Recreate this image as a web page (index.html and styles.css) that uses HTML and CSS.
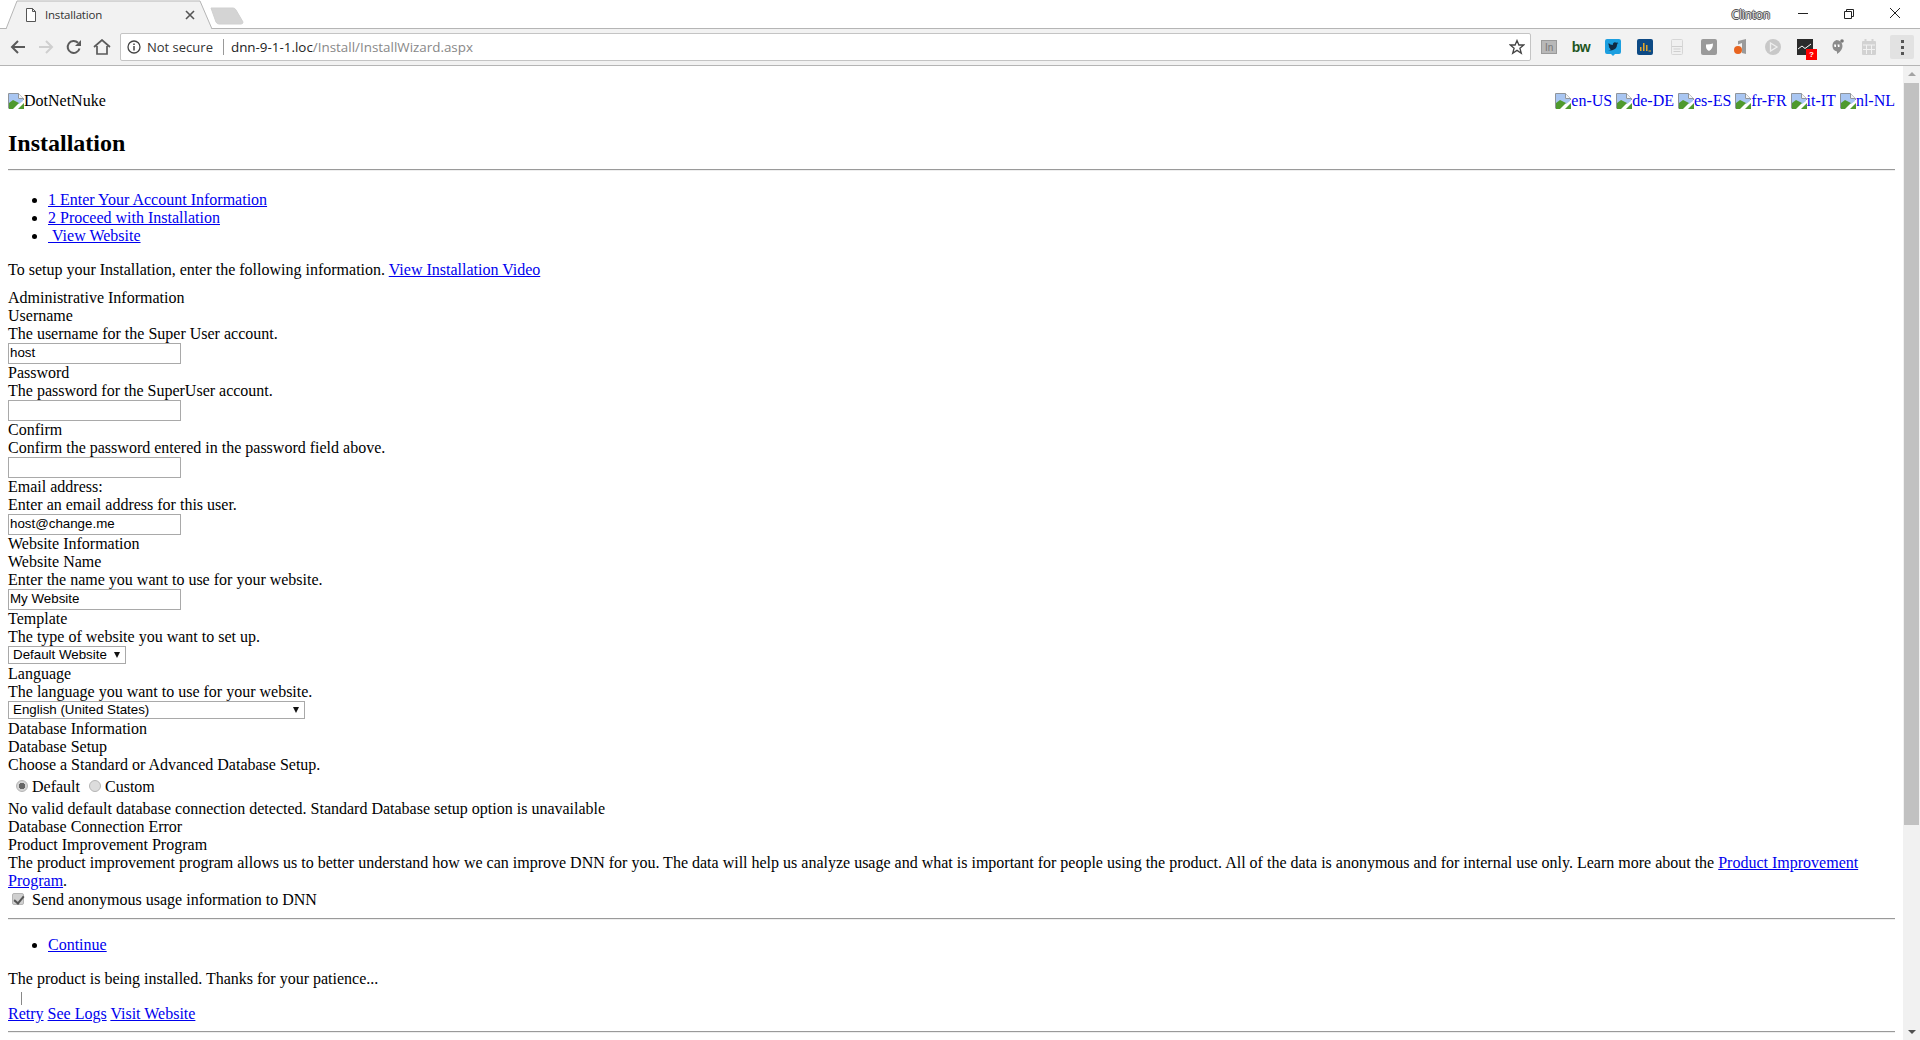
FILE: index.html
```html
<!DOCTYPE html>
<html lang="en">
<head>
<meta charset="utf-8">
<title>Installation</title>
<link rel="stylesheet" href="styles.css">
</head>
<body>
<svg class="defs" width="0" height="0" aria-hidden="true">
  <symbol id="broken" viewBox="0 0 16 16">
    <path d="M0 0H10.500L16 5.500V16H0Z" fill="#fff"/>
    <path d="M0.500 15.500V0.500H10.500L15.500 5.500V7" fill="none" stroke="#8f959c"/>
    <path d="M1 1H10V6H15V8L11 11L7 9L1 11Z" fill="#a9c6f2"/>
    <path d="M1 16V10L5 7L11 10L5 16Z" fill="#4f9a2e"/>
    <path d="M10 16L16 10V16Z" fill="#4f9a2e"/>
    <path d="M10.500 0.500V5.500H15.500" fill="#f4f4f4" stroke="#8f959c"/>
  </symbol>
</svg>

<header class="browser">
  <div class="tabstrip">
    <div class="tab">
      <svg class="tab-shape" width="212" height="29" viewBox="0 0 212 29"><path d="M0 29H5L16 1H199L211 29H212" fill="#f2f2f2" stroke="#b5b5b5"/></svg>
      <svg class="tab-icon" width="12" height="14" viewBox="0 0 12 14"><path d="M1.500 .5H7.500L10.500 3.500V13.500H1.500Z M7.500 .5V3.500H10.500" fill="#fff" stroke="#555"/></svg>
      <span class="tab-title">Installation</span>
      <svg class="tab-close" width="10" height="10" viewBox="0 0 10 10"><path d="M1 1L9 9M9 1L1 9" stroke="#555" stroke-width="1.600"/></svg>
    </div>
    <svg class="newtab" width="34" height="18" viewBox="0 0 34 18"><path d="M1 1H23Q25 1 26 3L33 15Q33 17 31 17H9Q7 17 6 15Z" fill="#d4d4d4" stroke="#d0d0d0"/></svg>
    <span class="profile">Clinton</span>
    <div class="winctl">
      <svg width="46" height="28" viewBox="0 0 46 28"><path d="M18 13.500H28" stroke="#222"/></svg>
      <svg width="46" height="28" viewBox="0 0 46 28"><path d="M18.500 11.500H25.500V18.500H18.500Z M20.500 11V9.500H27.500V16.500H26" fill="none" stroke="#222"/></svg>
      <svg width="46" height="28" viewBox="0 0 46 28"><path d="M18 8L28 18M28 8L18 18" stroke="#222"/></svg>
    </div>
  </div>
  <div class="toolbar">
    <span class="navbtn"><svg width="16" height="16" viewBox="0 0 16 16"><path d="M15 8H2M8 2L2 8L8 14" fill="none" stroke="#5a5a5a" stroke-width="2"/></svg></span>
    <span class="navbtn"><svg width="16" height="16" viewBox="0 0 16 16"><path d="M1 8H14M8 2L14 8L8 14" fill="none" stroke="#cfcfcf" stroke-width="2"/></svg></span>
    <span class="navbtn"><svg width="16" height="16" viewBox="0 0 16 16"><path d="M13.500 9.500A6 6 0 1 1 12 3.800" fill="none" stroke="#5a5a5a" stroke-width="2"/><path d="M15 1V7H9Z" fill="#5a5a5a"/></svg></span>
    <span class="navbtn"><svg width="18" height="16" viewBox="0 0 18 16"><path d="M1 8L9 1L17 8M4 7V15H14V7" fill="none" stroke="#5a5a5a" stroke-width="1.700"/></svg></span>
    <div class="omnibox">
      <svg class="info" width="14" height="14" viewBox="0 0 14 14"><circle cx="7" cy="7" r="6" fill="none" stroke="#444" stroke-width="1.300"/><path d="M7 6V10.500M7 3.500V5" stroke="#444" stroke-width="1.500"/></svg>
      <span class="secure">Not secure</span>
      <span class="sep"></span>
      <span class="url">dnn-9-1-1.loc<span class="path">/Install/InstallWizard.aspx</span></span>
      <svg class="star" width="16" height="16" viewBox="0 0 16 16"><path d="M8 1.500L9.900 6H14.800L10.900 9.200L12.300 14.200L8 11.400L3.700 14.200L5.100 9.200L1.200 6H6.100Z" fill="none" stroke="#444" stroke-width="1.300"/></svg>
    </div>
    <div class="extensions">
      <span class="ext"><svg width="16" height="14" viewBox="0 0 16 14"><rect x=".5" y=".5" width="15" height="13" fill="#b8b8b8" stroke="#9a9a9a"/><text x="4" y="11" class="ext-in">In</text></svg></span>
      <span class="ext"><span class="bw">bw</span></span>
      <span class="ext"><svg width="16" height="17" viewBox="0 0 16 17"><path d="M2 0H14Q16 0 16 2V13Q16 15 14 15H10L8 17L6 15H2Q0 15 0 13V2Q0 0 2 0Z" fill="#1c9fe0"/><path d="M3 11Q6 12 9 10.500Q12 9 12 5.500L13.500 4.300L12 4.500L13 3.300L11.500 3.800Q9.500 2.500 8 4.500L7.800 6Q5 5.800 3.600 4Q3 6 4.500 7.500L3.700 7.300Q4 9 5.500 9.500L4.600 9.600Q5.300 10.500 6 10.500Q4.500 11.300 3 11Z" fill="#102a43"/></svg></span>
      <span class="ext"><svg width="16" height="16" viewBox="0 0 16 16"><rect width="16" height="16" rx="2" fill="#0d4a85"/><path d="M3 12V8H4.500V12ZM6 12V4H7.500V12ZM9 12V6H10.500V12Z" fill="#e5a629"/><path d="M11.500 12H14" stroke="#e5a629"/></svg></span>
      <span class="ext"><svg width="12" height="16" viewBox="0 0 12 16"><rect x=".5" y=".5" width="11" height="15" rx="1" fill="#f0f0f0" stroke="#d6d6d6"/><path d="M1 7.500H11M2.500 10H9.500M2.500 12.500H9.500" stroke="#cfcfcf"/></svg></span>
      <span class="ext"><svg width="16" height="16" viewBox="0 0 16 16"><rect width="16" height="16" rx="2" fill="#9a9a9a"/><path d="M5 5.500Q9 5.500 12 4.500Q12 10 8 12Q4.500 10.500 5 5.500Z" fill="#fff"/></svg></span>
      <span class="ext"><svg width="16" height="18" viewBox="0 0 16 18"><path d="M5 3L13 1V16L9 15V5L5 6.500Z" fill="#9a9a9a"/><circle cx="5" cy="12" r="4" fill="#e8641f"/></svg></span>
      <span class="ext"><svg width="16" height="16" viewBox="0 0 16 16"><circle cx="8" cy="8" r="8" fill="#c8c8c8"/><path d="M5.500 4L12 8L5.500 12Z" fill="none" stroke="#eee" stroke-width="1.300"/></svg></span>
      <span class="ext ext-pulse"><svg width="16" height="16" viewBox="0 0 16 16"><rect width="16" height="16" fill="#2b2b2b"/><path d="M1 10L5 7L8 9.500L14 5" fill="none" stroke="#fff"/></svg><span class="badge">?</span></span>
      <span class="ext"><svg width="14" height="17" viewBox="0 0 14 17"><path d="M6.500 1A6 6 0 0 1 12.500 7Q12.500 11.500 7 15V12.500A6 6 0 0 1 6.500 1Z" fill="#8c8c8c"/><path d="M4 5.500H6V8H4.500ZM7.500 5.500H9.500V8H8Z" fill="#fff"/><circle cx="12" cy="2" r="1.800" fill="#777"/></svg></span>
      <span class="ext"><svg width="14" height="16" viewBox="0 0 14 16"><rect y="2" width="14" height="14" rx="1" fill="#d2d2d2"/><path d="M3.500 0V3M10.500 0V3" stroke="#d2d2d2" stroke-width="2"/><path d="M1 6H13M4.500 6V15M9.500 6V15M1 10.500H13" stroke="#f2f2f2"/></svg></span>
      <span class="ext ext-menu"><span class="dots"><i></i><i></i><i></i></span></span>
    </div>
  </div>
</header>

<div class="viewport">
  <main class="page">
    <div class="top">
      <span class="alt"><svg class="broken"><use href="#broken"/></svg>DotNetNuke</span>
      <nav class="flags">
        <a href="#"><svg class="broken"><use href="#broken"/></svg>en-US</a>
        <a href="#"><svg class="broken"><use href="#broken"/></svg>de-DE</a>
        <a href="#"><svg class="broken"><use href="#broken"/></svg>es-ES</a>
        <a href="#"><svg class="broken"><use href="#broken"/></svg>fr-FR</a>
        <a href="#"><svg class="broken"><use href="#broken"/></svg>it-IT</a>
        <a href="#"><svg class="broken"><use href="#broken"/></svg>nl-NL</a>
      </nav>
    </div>
    <h2 class="title">Installation</h2>
    <hr class="rule">
    <ul class="steps">
      <li><a class="link" href="#">1 Enter Your Account Information</a></li>
      <li><a class="link" href="#">2 Proceed with Installation</a></li>
      <li><a class="link" href="#">&nbsp;View Website</a></li>
    </ul>
    <p class="intro">To setup your Installation, enter the following information. <a class="link" href="#">View Installation Video</a></p>

    <div class="line">Administrative Information</div>
    <div class="line">Username</div>
    <div class="line">The username for the Super User account.</div>
    <div class="field"><input class="text" type="text" value="host"></div>
    <div class="line">Password</div>
    <div class="line">The password for the SuperUser account.</div>
    <div class="field"><input class="text" type="password"></div>
    <div class="line">Confirm</div>
    <div class="line">Confirm the password entered in the password field above.</div>
    <div class="field"><input class="text" type="password"></div>
    <div class="line">Email address:</div>
    <div class="line">Enter an email address for this user.</div>
    <div class="field"><input class="text" type="text" value="host@change.me"></div>
    <div class="line">Website Information</div>
    <div class="line">Website Name</div>
    <div class="line">Enter the name you want to use for your website.</div>
    <div class="field"><input class="text" type="text" value="My Website"></div>
    <div class="line">Template</div>
    <div class="line">The type of website you want to set up.</div>
    <div class="selectrow"><span class="selectbox tpl"><select class="select"><option>Default Website</option></select></span></div>
    <div class="line">Language</div>
    <div class="line">The language you want to use for your website.</div>
    <div class="selectrow"><span class="selectbox lang"><select class="select"><option>English (United States)</option></select></span></div>
    <div class="line">Database Information</div>
    <div class="line">Database Setup</div>
    <div class="line">Choose a Standard or Advanced Database Setup.</div>
    <div class="radios">
      <label class="choice"><input class="radio" type="radio" name="db" checked>Default</label>
      <label class="choice"><input class="radio" type="radio" name="db">Custom</label>
    </div>
    <div class="line">No valid default database connection detected. Standard Database setup option is unavailable</div>
    <div class="line">Database Connection Error</div>
    <div class="line">Product Improvement Program</div>
    <div class="para">The product improvement program allows us to better understand how we can improve DNN for you. The data will help us analyze usage and what is important for people using the product. All of the data is anonymous and for internal use only. Learn more about the <a class="link" href="#">Product Improvement Program</a>.</div>
    <label class="consent"><input class="check" type="checkbox" checked>Send anonymous usage information to DNN</label>
    <hr class="rule rule-mid">
    <ul class="steps steps-end">
      <li><a class="link" href="#">Continue</a></li>
    </ul>
    <p class="patience">The product is being installed. Thanks for your patience...</p>
    <div class="caret"></div>
    <div class="line actions"><a class="link" href="#">Retry</a> <a class="link" href="#">See Logs</a> <a class="link" href="#">Visit Website</a></div>
    <hr class="rule rule-end">
  </main>
  <aside class="scrollbar">
    <span class="arrow up"></span>
    <span class="thumb"></span>
    <span class="arrow down"></span>
  </aside>
</div>
</body>
</html>
```

FILE: styles.css
```css
* { box-sizing: border-box; }
html, body { margin: 0; height: 100%; overflow: hidden; background: #fff; }
body { display: flex; flex-direction: column; font-family: "Liberation Serif", serif; font-size: 16px; line-height: 18px; color: #000; }
.defs { position: absolute; }

.browser { flex: none; height: 66px; background: #f2f2f2; border-bottom: 1px solid #b5b5b5; font-family: "Open Sans", "Noto Sans", sans-serif; }
.tabstrip { display: flex; align-items: flex-start; height: 29px; background: #fff; border-bottom: 1px solid #b5b5b5; }
.tab { position: relative; flex: none; display: flex; align-items: center; width: 212px; height: 29px; margin-left: 1px; padding: 0 0 0 24px; }
.tab-shape { position: absolute; left: 0; top: 0; }
.tab-icon, .tab-title, .tab-close { position: relative; flex: none; }
.tab-title { margin-left: 8px; width: 134px; font-size: 11.5px; letter-spacing: -.2px; color: #333; line-height: 29px; }
.tab-close { margin-left: 6px; margin-top: 1px; }
.newtab { flex: none; margin: 7px 0 0 -3px; }
.profile { margin-left: auto; margin-right: 10px; margin-top: 7px; font-size: 12px; line-height: 16px; color: #ddd; text-shadow: -1px 0 #555, 1px 0 #555, 0 -1px #555, 0 1px #555; letter-spacing: -.2px; }
.winctl { display: flex; flex: none; margin-right: 2px; }
.winctl svg { display: block; }

.toolbar { display: flex; align-items: center; height: 36px; padding: 0 6px 0 4px; }
.navbtn { flex: none; display: flex; align-items: center; justify-content: center; width: 28px; height: 28px; }
.omnibox { flex: 1; display: flex; align-items: center; height: 28px; margin: 0 2px 0 4px; padding: 0 5px 0 6px; background: #fff; border: 1px solid #c4c4c4; border-radius: 2px; font-size: 13px; }
.info { flex: none; }
.secure { margin-left: 6px; color: #333; white-space: nowrap; }
.sep { flex: none; width: 1px; height: 16px; margin: 0 7px 0 10px; background: #999; }
.url { flex: 1; font-size: 13.4px; color: #222; white-space: nowrap; }
.path { color: #888; }
.star { flex: none; }
.extensions { display: flex; flex: none; }
.ext { position: relative; flex: none; display: flex; align-items: center; justify-content: center; width: 32px; height: 24px; }
.ext-in { font: 10px "Liberation Sans", sans-serif; fill: #777; }
.bw { font: bold 14px "Liberation Sans", sans-serif; color: #22561f; letter-spacing: -.5px; }
.badge { position: absolute; left: 17px; top: 14px; width: 11px; height: 11px; background: #f00; color: #fff; font: bold 8px/11px "Liberation Sans", sans-serif; text-align: center; }
.ext-menu { width: 24px; margin-left: 5px; background: #e2e2e2; border-radius: 2px; }
.dots { display: flex; flex-direction: column; gap: 3px; }
.dots i { display: block; width: 3px; height: 3px; background: #555; }

.viewport { flex: 1; display: flex; min-height: 0; }
.page { flex: 1; min-width: 0; padding: 26px 8px 0; overflow: hidden; }
.top { display: flex; justify-content: space-between; height: 18px; }
.broken { display: inline-block; width: 16px; height: 16px; vertical-align: -3px; }
.flags { display: flex; gap: 4px; white-space: nowrap; }
.flags a { color: #00e; text-decoration: none; }
.link { color: #00e; text-decoration: underline; }
.title { margin: 20px 0 12px; font-size: 24px; line-height: 27px; font-weight: bold; }
.rule { height: 2px; margin: 0; border: 0; border-top: 1px solid #9a9a9a; border-bottom: 1px solid #eee; }
.steps { margin: 20px 0 16px; padding-left: 40px; }
.intro { margin: 0 0 10px; }
.line { height: 18px; white-space: nowrap; }
.para { line-height: 18px; }
.field { height: 21px; }
.text { display: block; width: 173px; height: 21px; padding: 0 1px 2px; border: 1px solid #a9a9a9; background: #fff; font: 13.33px "Liberation Sans", sans-serif; color: #000; }
.selectrow { height: 19px; }
.selectbox { position: relative; display: block; height: 18px; }
.selectbox::after { content: ""; position: absolute; right: 6px; top: 6px; border: 3.5px solid transparent; border-top: 6px solid #111; border-bottom: 0; }
.tpl { width: 118px; }
.lang { width: 297px; }
.select { display: block; width: 100%; height: 18px; padding: 0 0 0 4px; border: 1px solid #a9a9a9; background: #fff; border-radius: 0; appearance: none; font: 13.33px/16px "Liberation Sans", sans-serif; color: #000; }
.radios { display: flex; align-items: center; gap: 5px; height: 26px; padding-left: 8px; }
.choice { display: flex; align-items: center; margin-right: 4px; }
.radio { appearance: none; flex: none; width: 12px; height: 12px; margin: -3px 4px 0 0; border: 1px solid #b5b5b5; border-radius: 50%; background: #dcdcdc; }
.radio:checked { background: radial-gradient(circle, #666 0 3px, #d4d4d4 3.5px); }
.consent { display: flex; align-items: center; height: 20px; padding-left: 4px; }
.check { appearance: none; flex: none; position: relative; width: 12px; height: 12px; margin: -2px 8px 0 0; border: 1px solid #b5b5b5; border-radius: 2px; background: #d0d0d0; }
.check::after { content: ""; position: absolute; left: 3px; top: 0; width: 4px; height: 8px; border: solid #555; border-width: 0 2px 2px 0; transform: rotate(40deg); }
.rule-mid { margin-top: 8px; }
.steps-end { margin-top: 16px; margin-bottom: 16px; }
.patience { margin: 0; }
.caret { width: 1px; height: 17px; margin-left: 13px; border-top: 4px solid #fff; background: #888; }
.rule-end { margin-top: 8px; }

.scrollbar { flex: none; display: flex; flex-direction: column; align-items: center; width: 17px; background: #f1f1f1; }
.arrow { flex: none; width: 0; height: 0; border-left: 4px solid transparent; border-right: 4px solid transparent; }
.up { margin-top: 6px; border-bottom: 4px solid #a3a3a3; }
.down { margin: 8px 0 6px; border-top: 4px solid #505050; }
.thumb { width: 15px; height: 742px; margin-top: 7px; margin-bottom: auto; background: #c1c1c1; }
```
